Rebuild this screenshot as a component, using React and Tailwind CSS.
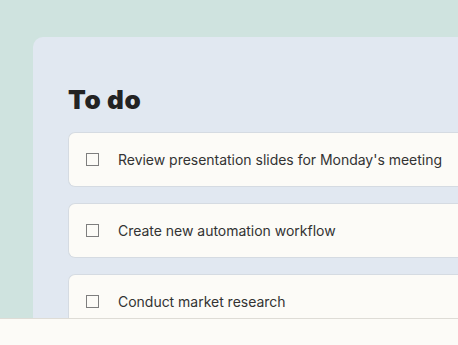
const tasks = [
  "Review presentation slides for Monday's meeting",
  "Create new automation workflow",
  "Conduct market research",
];

export default function App() {
  return (
    <div className="relative h-[345px] w-[458px] overflow-hidden bg-[#cfe3df] font-['Inter',sans-serif]">
      <div className="ml-[33px] mt-[37px] h-[281px] rounded-tl-[10px] bg-[#e1e8f1] pl-[35px] pt-[47px]">
        <h1 className="text-[26px] leading-[32px] font-black tracking-[0.6px] text-[#232323]">
          To do
        </h1>
        <div className="mt-[16px] flex flex-col gap-[16px]">
          {tasks.map((t) => (
            <div
              key={t}
              className="flex h-[55px] w-[420px] items-center rounded-l-[7px] border border-r-0 border-[#d5dbe2] bg-[#fcfbf7] pb-[1px] pl-[17px]"
            >
              <span className="h-[13px] w-[13px] shrink-0 border-[1.5px] border-[#7e7e7e]"></span>
              <span className="ml-[19px] whitespace-nowrap text-[14px] tracking-[-0.02px] text-[#333333]">{t}</span>
            </div>
          ))}
        </div>
      </div>
      <div className="absolute bottom-0 left-0 h-[27px] w-full border-t border-[#dedcd6] bg-[#fcfbf7]"></div>
    </div>
  );
}
